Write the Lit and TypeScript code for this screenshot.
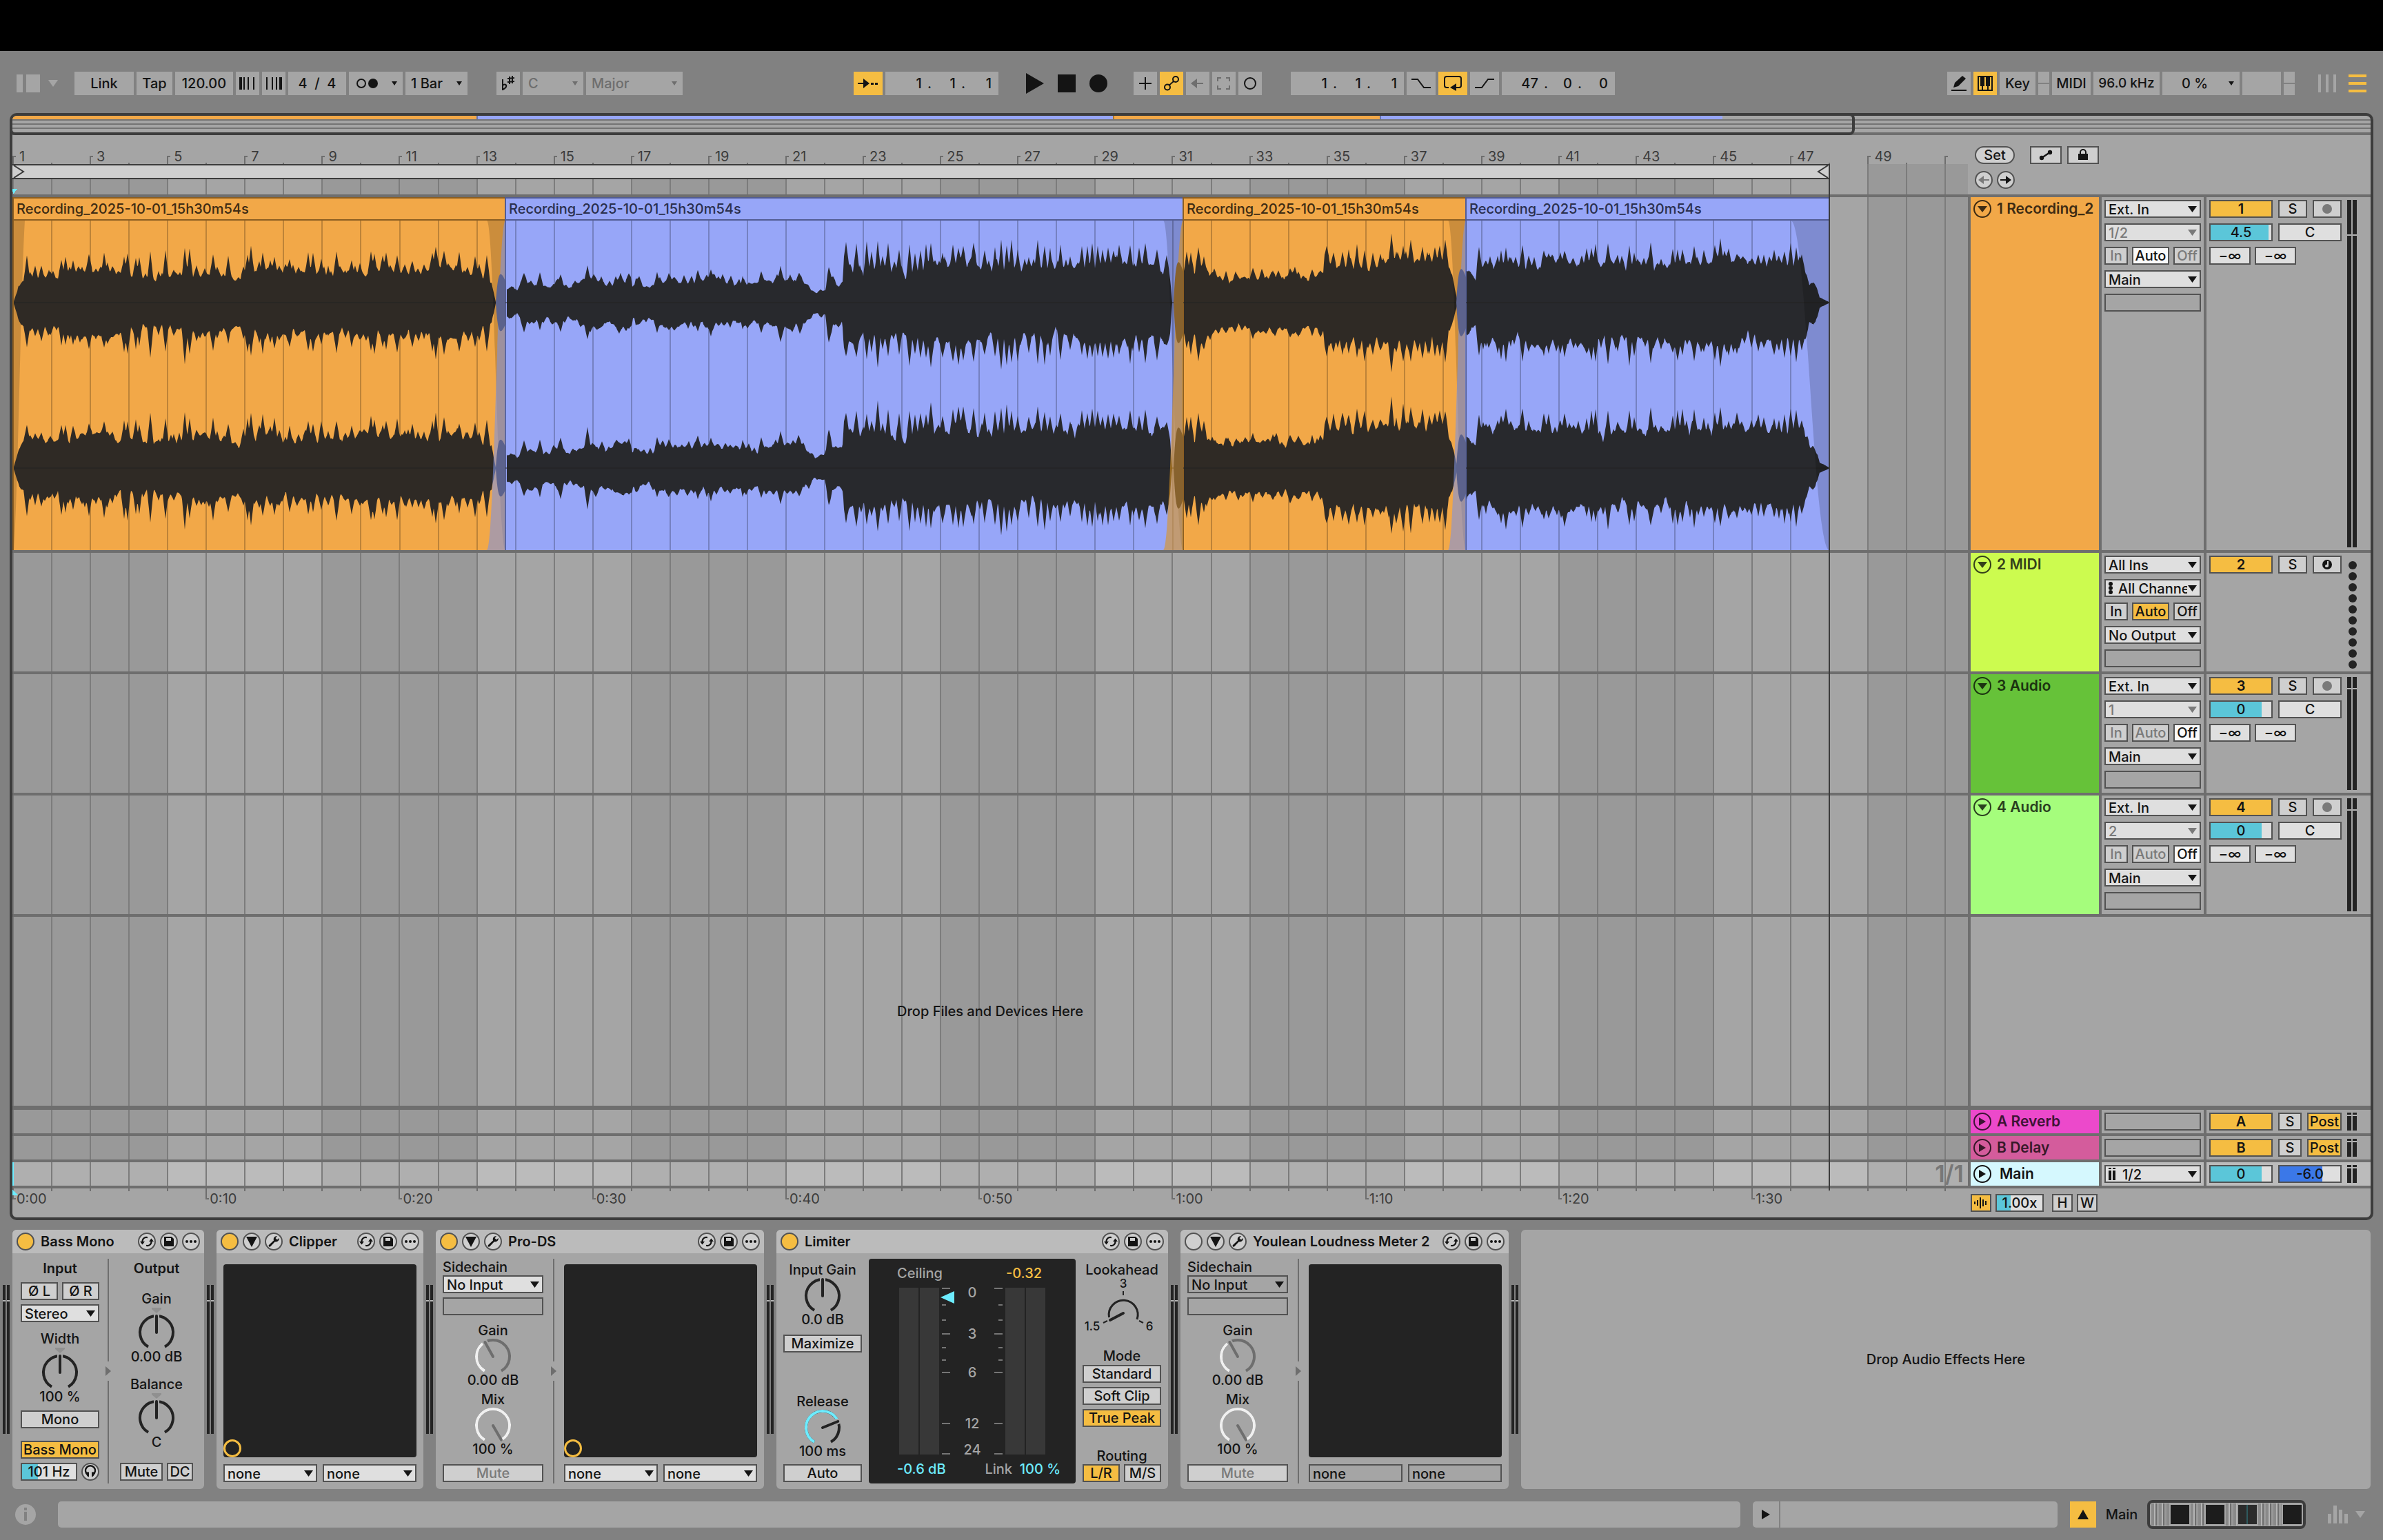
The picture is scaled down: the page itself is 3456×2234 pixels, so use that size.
import { LitElement, html, svg, css, nothing, type TemplateResult } from "lit";
import { customElement } from "lit/decorators.js";

/* ---------- timeline geometry ---------- */
const VIEW = 2836; // drawing units across the visible timeline
const BAR = 56.05; // drawing units per bar
const barX = (bar: number) => (bar - 1) * BAR + 1;
const pct = (x: number) => `${((x / VIEW) * 100).toFixed(4)}%`;
const BARS = Array.from({ length: 51 }, (_, i) => i + 1);
const END = 2635;
const BODY = 478;

/* ---------- clip data ---------- */
type Pt = [number, number];
interface Clip {
  start: number;
  end: number;
  color: "orange" | "blue";
  env: Pt[];
  spikes: Pt[];
}
const NAME = "Recording_2025-10-01_15h30m54s";
const CLIPS: Clip[] = [
  {
    start: 0, end: 714, color: "orange",
    env: [[2, 2], [9, 25], [16, 36], [42, 35], [72, 37], [102, 45], [142, 43], [177, 36], [212, 31], [232, 37], [282, 42], [327, 33], [347, 40], [402, 42], [442, 41], [542, 42], [622, 44], [672, 42], [688, 37], [695, 34], [701, 1]],
    spikes: [[21, 66], [33, 51], [42, 55], [55, 44], [71, 65], [77, 65], [88, 59], [101, 52], [111, 66], [121, 51], [133, 69], [138, 56], [145, 51], [162, 71], [167, 71], [179, 66], [184, 62], [200, 76], [212, 44], [222, 73], [234, 49], [250, 84], [257, 75], [267, 56], [279, 51], [291, 73], [297, 52], [313, 63], [335, 54], [341, 73], [346, 78], [358, 61], [363, 73], [374, 57], [380, 68], [387, 54], [402, 65], [415, 49], [429, 70], [436, 68], [448, 63], [458, 51], [470, 72], [492, 64], [504, 56], [520, 73], [525, 72], [537, 65], [542, 71], [558, 73], [569, 52], [580, 61], [597, 56], [609, 68], [614, 83], [626, 78], [632, 54], [643, 56], [648, 68], [660, 55], [671, 68], [677, 54], [688, 70]],
  },
  {
    start: 714, end: 1697, color: "blue",
    env: [[717, 20], [724, 23], [732, 16], [740, 29], [757, 26], [777, 21], [792, 28], [805, 20], [832, 30], [847, 35], [862, 25], [877, 34], [897, 32], [900, 15], [904, 32], [922, 20], [942, 31], [982, 30], [1022, 32], [1054, 30], [1057, 18], [1062, 30], [1080, 25], [1092, 30], [1132, 34], [1144, 38], [1152, 26], [1164, 14], [1180, 18], [1185, 40], [1190, 30], [1204, 25], [1206, 52], [1232, 48], [1292, 44], [1342, 50], [1392, 52], [1442, 47], [1502, 48], [1562, 50], [1622, 52], [1672, 52], [1679, 40], [1682, 1]],
    spikes: [[742, 40], [765, 41], [795, 42], [834, 56], [894, 40], [935, 42], [952, 42], [994, 44], [1013, 46], [1059, 40], [1086, 45], [1114, 54], [1184, 54], [1209, 82], [1215, 56], [1224, 81], [1239, 83], [1246, 70], [1255, 91], [1262, 63], [1270, 80], [1286, 80], [1301, 86], [1309, 75], [1317, 78], [1325, 80], [1332, 89], [1349, 77], [1364, 83], [1372, 84], [1379, 86], [1394, 84], [1410, 78], [1425, 83], [1434, 92], [1442, 86], [1449, 86], [1458, 80], [1474, 70], [1487, 85], [1497, 84], [1505, 76], [1520, 80], [1534, 70], [1551, 78], [1559, 78], [1566, 84], [1574, 79], [1581, 78], [1589, 78], [1597, 76], [1605, 78], [1621, 85], [1634, 76], [1643, 82], [1660, 79], [1674, 65]],
  },
  {
    start: 1697, end: 2107, color: "orange",
    env: [[1699, 40], [1703, 45], [1728, 48], [1732, 42], [1747, 37], [1756, 33], [1782, 36], [1832, 38], [1845, 34], [1857, 40], [1878, 31], [1901, 38], [1903, 56], [1922, 50], [1982, 53], [2022, 56], [2078, 54], [2088, 35], [2096, 1]],
    spikes: [[1703, 69], [1709, 73], [1720, 79], [1728, 67], [1740, 45], [1760, 44], [1799, 50], [1828, 47], [1853, 48], [1865, 47], [1885, 47], [1897, 47], [1906, 78], [1916, 74], [1929, 76], [1938, 78], [1950, 82], [1961, 80], [1973, 74], [1984, 70], [2000, 98], [2007, 75], [2017, 87], [2028, 90], [2045, 82], [2055, 76], [2063, 76], [2070, 78], [2078, 87]],
  },
  {
    start: 2107, end: END, color: "blue",
    env: [[2109, 47], [2114, 42], [2123, 34], [2126, 50], [2182, 52], [2232, 55], [2292, 52], [2352, 50], [2422, 53], [2482, 56], [2532, 50], [2582, 50], [2592, 52], [2600, 46], [2606, 28], [2612, 28], [2618, 18], [2621, 7], [2628, 4], [2634, 1]],
    spikes: [[2127, 80], [2137, 65], [2154, 69], [2159, 79], [2166, 84], [2173, 65], [2190, 81], [2199, 67], [2221, 76], [2228, 76], [2245, 70], [2251, 79], [2264, 66], [2283, 75], [2290, 79], [2296, 80], [2314, 84], [2328, 66], [2345, 86], [2352, 72], [2376, 88], [2391, 65], [2408, 77], [2415, 82], [2422, 80], [2439, 81], [2453, 74], [2469, 82], [2477, 88], [2489, 73], [2501, 75], [2522, 66], [2532, 74], [2540, 70], [2555, 74], [2562, 72], [2570, 79], [2579, 81], [2587, 81], [2595, 66], [2611, 30]],
  },
];

const FADES = [
  { x0: 688, x1: 715, tint: "tint-blue", wave: "ghost-blue", amp: 45 },
  { x0: 1669, x1: 1698, tint: "tint-orange", wave: "ghost-orange", amp: 64 },
  { x0: 2082, x1: 2108, tint: "tint-blue", wave: "ghost-blue", amp: 53 },
];

function random(seed: number) {
  let s = seed >>> 0;
  return () => {
    s = (s + 0x6d2b79f5) >>> 0;
    let t = Math.imul(s ^ (s >>> 15), 1 | s);
    t = (t + Math.imul(t ^ (t >>> 7), 61 | t)) ^ t;
    return ((t ^ (t >>> 14)) >>> 0) / 4294967296;
  };
}

function envelope(env: Pt[], x: number) {
  for (let i = 1; i < env.length; i++) {
    if (x <= env[i][0]) {
      const [ax, ay] = env[i - 1];
      const [bx, by] = env[i];
      return ay + ((by - ay) * (x - ax)) / Math.max(1, bx - ax);
    }
  }
  return 0;
}

/* One edge of a waveform: the envelope with drift, the clip's own peaks and small peaks between them. */
function side(clip: Clip, seed: number) {
  const rnd = random(seed);
  const first = clip.env[0][0];
  const last = clip.env[clip.env.length - 1][0];
  const peaks = clip.spikes.map(([x, a]) => [x, a * (0.94 + rnd() * 0.14)] as Pt);
  for (let x = first + 24; x < last - 30; x += 6 + rnd() * 8) {
    peaks.push([Math.round(x), envelope(clip.env, x) * (1.02 + rnd() * 0.34)]);
  }
  const out: Pt[] = [];
  let drift = 0;
  for (let x = first; x <= last; x += 1) {
    if (x % 2 === 0) drift = drift * 0.84 + (rnd() - 0.5) * 0.16;
    const base = envelope(clip.env, x) * (0.97 + drift);
    let a = base;
    for (const [px, pa] of peaks) {
      const d = Math.abs(px - x);
      if (d < 5) a = Math.max(a, base + (pa - base) * (d < 1 ? 1 : 1 - d / 5));
    }
    out.push([x, Math.max(0.5, a)]);
  }
  return out;
}

function wavePath(clip: Clip, centre: number, seed: number) {
  const up = side(clip, seed);
  const down = side(clip, seed + 7).reverse();
  const p = (x: number, y: number) => `${x} ${y.toFixed(1)}`;
  return `M${up.map(([x, a]) => p(x, centre - a)).join("L")}L${down.map(([x, a]) => p(x, centre + a)).join("L")}Z`;
}
const CENTRES = [119, 359];
const WAVES = CLIPS.flatMap((clip, i) =>
  CENTRES.map((c, j) => ({ d: wavePath(clip, c, 31 * i + 113 * j + 5), color: clip.color })),
);

/* S-shaped fade curve between two corners, closed along the right edge. */
function fadeShape(x0: number, x1: number, rising: boolean) {
  const w = x1 - x0;
  const [a, b] = rising ? [BODY, 0] : [0, BODY];
  return `M${x0} ${a}C${x0 + w * 0.42} ${a} ${x0 + w * 0.58} ${b} ${x1} ${b}L${x1} ${a}Z`;
}

/* ---------- icons ---------- */
const I = (w: number, h: number, body: TemplateResult) =>
  html`<svg class="ico" width=${w} height=${h} viewBox="0 0 ${w} ${h}" aria-hidden="true">${body}</svg>`;
const icons = {
  nudgeDown: I(24, 18, svg`<path d="M0 0h4v18H0zM6 0h2v18H6zM12 0h2v18h-2zM20 0h2v18h-2z"/>`),
  nudgeUp: I(24, 18, svg`<path d="M1 0h2v18H1zM9 0h2v18H9zM15 0h2v18h-2zM20 0h4v18h-4z"/>`),
  metro: I(34, 16, svg`<circle cx="8" cy="8" r="6" fill="none" stroke="currentColor" stroke-width="2"/><circle cx="25" cy="8" r="7"/>`),
  scale: I(20, 22, svg`<path d="M2 5v16M2 14c3-3 6-1 5 2c-1 2-3 3-5 4" fill="none" stroke="currentColor" stroke-width="2"/><path d="M12 1v11M16 0v11M9 4l10-1M9 9l10-1" fill="none" stroke="currentColor" stroke-width="2"/>`),
  follow: I(32, 16, svg`<path d="M1 7h8V1l9 7l-9 7V9H1zM20 7h4v3h-4zM26 7h4v3h-4z"/>`),
  play: I(26, 30, svg`<path d="M0 0L26 15L0 30z"/>`),
  stop: I(26, 26, svg`<path d="M0 0h26v26H0z"/>`),
  rec: I(26, 26, svg`<circle cx="13" cy="13" r="13"/>`),
  plus: I(20, 20, svg`<path d="M9 1h2v18H9zM1 9h18v2H1z"/>`),
  link: I(24, 24, svg`<g fill="none" stroke="currentColor" stroke-width="2"><circle cx="6" cy="17.500" r="4"/><circle cx="18" cy="6" r="4"/><path d="M8.500 14.500C12 12 12 11 15.500 9"/></g>`),
  back: I(20, 16, svg`<path d="M0 8l9-7v6h9v2H9v6z"/>`),
  frame: I(20, 20, svg`<path d="M1 7V2h5M13 2h5v5M18 13v5h-5M6 18H1v-5" fill="none" stroke="currentColor" stroke-width="2"/>`),
  ring: I(20, 20, svg`<circle cx="10" cy="10" r="8" fill="none" stroke="currentColor" stroke-width="2"/>`),
  punchIn: I(28, 16, svg`<path d="M0 2h9L18 14h10" fill="none" stroke="currentColor" stroke-width="2"/>`),
  punchOut: I(28, 16, svg`<path d="M0 14h10L19 2h9" fill="none" stroke="currentColor" stroke-width="2"/>`),
  loop: I(28, 24, svg`<path d="M8 18H5Q2 18 2 15V5Q2 2 5 2H23Q26 2 26 5V15Q26 18 23 18H18" fill="none" stroke="currentColor" stroke-width="2"/><path d="M19 12v11L10 18z"/>`),
  pencil: I(24, 24, svg`<path d="M4 18l2-7L17 1l5 4L11 16zM1 21h22v2H1z"/>`),
  piano: I(24, 24, svg`<path fill-rule="evenodd" d="M1 1h22v22H1zM3 3v18h4v-5H5V3zM9 16v5h6v-5h-2V3h-2v13zM19 3v13h-2v5h4V3z"/>`),
  auto: I(24, 16, svg`<path d="M6 12L18 4" fill="none" stroke="currentColor" stroke-width="2.500"/><circle cx="6" cy="12" r="3.200"/><circle cx="18" cy="4" r="3.200"/>`),
  lock: I(16, 18, svg`<path d="M1 7h14v9H1z"/><path d="M4 8V5a4 4 0 0 1 8 0v3" fill="none" stroke="currentColor" stroke-width="2"/>`),
  left: I(18, 14, svg`<path d="M1 7l8-6v5h8v2H9v5z"/>`),
  right: I(18, 14, svg`<path d="M17 7L9 1v5H1v2h8v5z"/>`),
  down: I(14, 9, svg`<path d="M0 0h14L7 9z"/>`),
  next: I(10, 12, svg`<path d="M0 0L10 6L0 12z"/>`),
  swap: I(20, 20, svg`<g fill="none" stroke="currentColor" stroke-width="2.200"><path d="M3.500 11C3 6 7 3 11 4.200"/><path d="M16.500 9C17 14 13 17 9 15.800"/></g><path d="M0 10h7l-3.500 4.500zM13 10h7L16.500 5.500z"/>`),
  save: I(16, 16, svg`<path fill-rule="evenodd" d="M1 1h11l3 3v11H1zM4 3v4h7V3z"/>`),
  dots: I(18, 6, svg`<circle cx="3" cy="3" r="2"/><circle cx="9" cy="3" r="2"/><circle cx="15" cy="3" r="2"/>`),
  wrench: I(18, 18, svg`<path d="M2 14L9 7.500C8 4 10.500 0.500 14 1.500L11.500 4L14 6.500L16.700 4C17.500 7.500 14 10.200 10.800 9.200L4.200 16.200C2.500 17.500 .7 15.700 2 14z"/>`),
  tri: I(16, 15, svg`<path d="M0 0h16L8 15z"/>`),
  phones: I(20, 20, svg`<path d="M6 14A7 7 0 1 1 14 14" fill="none" stroke="currentColor" stroke-width="2.400"/><path d="M4 10.500h4v7C5 17 4 14 4 10.500zM16 10.500h-4v7C15 17 16 14 16 10.500z"/>`),
  note: I(16, 16, svg`<path fill-rule="evenodd" d="M8 1a7 7 0 1 0 0 14A7 7 0 1 0 8 1zM8 3h2v7a2.500 2 0 1 1-2-2z"/>`),
  wave: I(20, 18, svg`<path d="M0 7h2v4H0zM4 5h2v8H4zM8 1h2v16H8zM12 4h2v10h-2zM16 6h2v6h-2z"/>`),
  chans: I(6, 18, svg`<circle cx="3" cy="3" r="3"/><circle cx="3" cy="9" r="3"/><circle cx="3" cy="15" r="3"/>`),
  pair: I(12, 18, svg`<path d="M0 0h4v2H0zM0 4h4v14H0zM6 0h4v2H6zM6 4h4v14H6z"/>`),
};

/* ---------- small parts ---------- */
let uid = 0;
interface SelectOpts { dim?: boolean; flat?: boolean; icon?: TemplateResult; arrow?: boolean; cls?: string }
const select = (label: string, value: string, o: SelectOpts = {}) => {
  const cls = ["sel", o.dim && "dim", o.flat && "flat", o.icon && "icon", o.arrow === false && "noarrow", o.cls].filter(Boolean).join(" ");
  return html`
    <span class=${cls}>
      ${o.icon ?? nothing}
      <select aria-label=${label} ?disabled=${!!o.dim}><option>${value}</option></select>
    </span>`;
};
const btn = (text: string | TemplateResult, cls = "", label = "") =>
  html`<button class="btn ${cls}" aria-label=${label || nothing}>${text}</button>`;
const tb = (text: string | TemplateResult, cls = "", label = "") =>
  html`<button class="tb ${cls}" aria-label=${label || nothing}>${text}</button>`;
const num = (label: string, value: string, fill: number, cls = "") => html`
  <span class="num ${cls}"><i style="width:${fill}%"></i><input aria-label=${label} .value=${value}></span>`;
const meter = () => html`<span class="meter"><i></i><i></i></span>`;

function polar(r: number, deg: number, cy: number) {
  const a = ((deg - 90) * Math.PI) / 180;
  return `${(28 + r * Math.cos(a)).toFixed(2)} ${(cy + r * Math.sin(a)).toFixed(2)}`;
}
const arc = (from: number, to: number, cy: number) =>
  `M${polar(24, from, cy)}A24 24 0 ${to - from > 180 ? 1 : 0} 1 ${polar(24, to, cy)}`;
interface KnobOpts { angle: number; tone?: "dark" | "dim" | "cyan"; mark?: boolean; cls?: string }
const knob = (label: string, value: string, o: KnobOpts) => {
  const id = `knob-${++uid}`;
  const cy = o.mark ? 39 : 28;
  const h = o.mark ? 64 : 52;
  const tone = o.tone ?? "dark";
  return html`
    <div class="knob ${tone} ${o.cls ?? ""}">
      <label for=${id}>${label}</label>
      <span class="dial">
        <svg width="56" height=${h} viewBox="0 0 56 ${h}" aria-hidden="true">
          <path class="rest" d=${arc(-150, 150, cy)} />
          ${tone === "dark" ? nothing : svg`<path class="lit" d=${arc(-150, o.angle, cy)} />`}
          ${o.angle < 150 ? svg`<path class="halo" d="M28 ${cy}L${polar(27, o.angle, cy)}" />` : nothing}
          <path class="hand" d="M28 ${cy}L${polar(24, o.angle, cy)}" />
          ${o.mark ? svg`<path class="mark" d="M21 3h14v2l-7 6l-7-6z" />` : nothing}
        </svg>
        <input id=${id} type="range" min="-150" max="150" .value=${String(o.angle)}>
      </span>
      <output for=${id}>${value}</output>
    </div>`;
};

const grid = () => html`
  <svg class="grid" width="100%" height="100%" aria-hidden="true">
    ${BARS.filter((b) => b % 8 === 1).map((b) => svg`<rect class="shade" x=${pct(barX(b))} y="0" width=${pct(BAR * 4)} height="100%" />`)}
    ${BARS.map((b) => svg`<line x1=${pct(barX(b))} x2=${pct(barX(b))} y1="0" y2="100%" />`)}
  </svg>`;

/* ---------- tracks ---------- */
interface Track {
  name: string; color: string; no: string; input: string; channel: string;
  midi?: boolean; monitor: string; output: string; volume?: [string, number];
}
const TRACKS: Track[] = [
  { name: "1 Recording_2", color: "t-orange", no: "1", input: "Ext. In", channel: "1/2", monitor: "Auto", output: "Main", volume: ["4.5", 95] },
  { name: "2 MIDI", color: "t-lime", no: "2", input: "All Ins", channel: "All Channels", midi: true, monitor: "Auto", output: "No Output" },
  { name: "3 Audio", color: "t-green", no: "3", input: "Ext. In", channel: "1", monitor: "Off", output: "Main", volume: ["0", 84] },
  { name: "4 Audio", color: "t-mint", no: "4", input: "Ext. In", channel: "2", monitor: "Off", output: "Main", volume: ["0", 84] },
];

@customElement("app-root")
export class AppRoot extends LitElement {
  static styles = css`
    :host { display: block; font: 500 20px/24px Inter, "Liberation Sans", sans-serif; color: #141414; }
    * { box-sizing: border-box; }
    button, input, select { font: inherit; color: inherit; margin: 0; padding: 0; border: 0; border-radius: 0; background: none; }
    svg { display: block; }
    .ico { fill: currentColor; flex: none; }
    .app { display: flex; flex-direction: column; min-height: 100vh; background: #818181; }
    .notch { height: 74px; background: #000; }

    /* toolbar */
    .toolbar { display: flex; align-items: center; padding: 30px 24px 26px; }
    .group { display: flex; align-items: center; gap: 4px; }
    .centre { margin-left: 248px; }
    .right { margin-left: auto; }
    .tb { position: relative; height: 34px; background: #a5a5a5; display: flex; align-items: center; justify-content: center; white-space: pre; }
    .tb.on { background: #f5bd42; }
    .tb.off { color: #6e6e6e; }
    .w16 { width: 16px; } .w34 { width: 34px; } .w38 { width: 38px; } .w42 { width: 42px; } .w52 { width: 52px; } .w56 { width: 56px; }
    .w62 { width: 62px; } .w84 { width: 84px; } .w86 { width: 86px; } .w78 { width: 78px; } .w88 { width: 88px; } .w90 { width: 90px; }
    .w96 { width: 96px; } .w112 { width: 112px; } .w140 { width: 140px; } .w164 { width: 164px; }
    .tb.w96 { font-size: 19px; }
    .between { justify-content: space-between; padding: 0 8px 0 10px; }
    .between.w112 { padding-left: 28px; }
    .tb .caret, .sel.bar::after { width: 8px; height: 6px; background: currentColor; clip-path: polygon(0 0, 100% 0, 50% 100%); }
    .pos { justify-content: flex-end; padding-right: 10px; }
    .pos span { width: 49px; text-align: right; }
    .pos span:last-child { width: 38px; }
    .pos b { font-weight: inherit; margin-left: 8px; }
    .split { flex-direction: column; gap: 2px; background: none; }
    .split i { flex: 1; align-self: stretch; background: #a5a5a5; }
    .bare { display: flex; align-items: center; }
    .transport { display: flex; align-items: center; gap: 20px; margin: 0 34px 0 36px; }
    .loopgroup { margin-left: 38px; }
    .viewer { display: flex; align-items: center; gap: 12px; color: #a5a5a5; margin-right: 24px; }
    .viewer .panes { display: flex; gap: 5px; height: 26px; }
    .panes i { background: #a5a5a5; width: 20px; }
    .panes i:first-child { width: 9px; }
    .scalegroup { margin-left: 42px; }
    .lines { display: flex; gap: 7px; height: 26px; margin: 0 14px 0 30px; }
    .lines i { width: 4px; background: #a5a5a5; }
    .menu { display: flex; flex-direction: column; justify-content: space-between; width: 26px; height: 26px; }
    .menu i { height: 4px; background: #f5bd42; }

    /* drop-downs */
    .sel { position: relative; display: flex; align-items: center; height: 26px; border: 2px solid #525252; background: #dfdfdf; min-width: 0; }
    .sel select { flex: 1; min-width: 0; width: 100%; height: 100%; appearance: none; padding: 0 18px 0 4px; outline: none; opacity: 1; }
    .sel::after { content: ""; position: absolute; right: 4px; top: 7px; width: 13px; height: 9px; background: currentColor; clip-path: polygon(0 0, 100% 0, 50% 100%); pointer-events: none; }
    .sel.dim { color: #7a7a7a; }
    .sel.flat { background: none; }
    .sel.noarrow::after { display: none; }
    .sel.icon { padding-left: 4px; }
    .sel.icon select { padding-left: 8px; }
    .sel.bar { border: 0; height: 34px; background: #a5a5a5; color: #6e6e6e; }
    .sel.bar select { padding-left: 8px; }
    .sel.bar.live { color: #141414; }
    .sel.bar::after { top: 14px; right: 8px; }

    .btn { display: flex; align-items: center; justify-content: center; height: 26px; border: 2px solid #525252; background: #cfcfcf; white-space: nowrap; }
    .btn.on { background: #f5bd42; }
    .btn.white { background: #fafafa; }
    .btn.off { color: #7a7a7a; }
    .btn.field { background: #dfdfdf; }
    .btn.strong { font-weight: 600; }
    .btn.pill { border-radius: 13px; width: 58px; }
    .round { display: flex; align-items: center; justify-content: center; flex: none; width: 26px; height: 26px; border: 2px solid #525252; border-radius: 50%; background: #cfcfcf; }
    .round.on { background: #f5bd42; }
    .round.clear { background: none; border-color: currentColor; }
    .round.off { color: #7a7a7a; }
    .num { position: relative; display: block; height: 26px; border: 2px solid #525252; background: #dfdfdf; }
    .num i { position: absolute; inset: 0 auto 0 0; background: #5bc6d9; }
    .num.blue i { background: #3b78e8; }
    .num input { position: relative; display: block; width: 100%; height: 100%; text-align: center; }

    /* arrangement */
    .arr { position: relative; flex: 1; display: flex; flex-direction: column; margin: 0 14px; border: 4px solid #3c3c3c; border-radius: 10px; background: #a5a5a5; overflow: hidden; }
    .overview { position: relative; height: 28px; border-bottom: 4px solid #6e6e6e; display: flex; flex-direction: column; }
    .mini { display: flex; height: 5px; }
    .mini i { display: block; height: 5px; border-left: 2px solid rgba(0, 0, 0, 0.3); }
    .mini i:first-child { border-left: 0; }
    .mini .orange { background: #f2a848; } .mini .blue { background: #97a6f8; }
    .overview hr { margin: 0; border: 0; background: #747474; height: 2px; }
    .overview b { height: 4px; }
    .window { position: absolute; inset: -4px auto -4px -4px; border: 4px solid #3c3c3c; border-radius: 8px; }
    .top { display: flex; border-bottom: 4px solid #6e6e6e; color: #3c3c3c; }
    .lane { position: relative; flex: 1; min-width: 0; }
    .side { width: 584px; flex: none; }
    .grid { position: absolute; inset: 0; }
    .grid .shade { fill: #999; }
    .grid line { stroke: #7c7c7c; stroke-width: 2; shape-rendering: crispEdges; }
    .bars { height: 42px; position: relative; }
    .loopbar { position: relative; height: 22px; }
    .loopbar .range { position: relative; height: 22px; border: solid #3c3c3c; border-width: 2px 0; background: #cfcfcf; display: flex; justify-content: space-between; }
    .loopbar svg.brace { fill: none; stroke: #3c3c3c; stroke-width: 2; }
    .scrub { position: relative; height: 22px; }
    .ruler { position: absolute; inset: 0; }
    .ruler text { font: 400 20px Inter, "Liberation Sans", sans-serif; fill: #3c3c3c; }
    .ruler path, .ruler line { stroke: #6e6e6e; stroke-width: 2; fill: none; shape-rendering: crispEdges; }
    .endline { position: absolute; top: 70px; bottom: 40px; left: calc((100% - 584px) * 0.9288); width: 2px; background: #3c3c3c; }
    .locators { display: flex; flex-direction: column; gap: 10px; padding: 16px 0 8px 10px; color: #141414; }
    .locators > div { display: flex; gap: 6px; align-items: center; }
    .locators .wide { width: 46px; }
    .locators .tools { display: flex; gap: 8px; margin-left: 16px; }

    .row { display: flex; border-bottom: 4px solid #6e6e6e; }
    .row.last { border-bottom-width: 6px; }
    .row.fill { flex: 1; }
    .row.fill .side { border-left: 4px solid #6e6e6e; }
    .head, .io, .mix { flex: none; border-left: 4px solid #6e6e6e; }
    .head { width: 190px; padding: 4px; display: flex; gap: 8px; align-items: flex-start; font-weight: 600; font-size: 21px; white-space: nowrap; }
    .head span { line-height: 26px; }
    .head.t-ice { gap: 12px; }
    .t-orange { background: #f2a848; color: #3d2b13; } .t-lime { background: #ccfb4f; color: #34401a; } .t-green { background: #66c239; color: #1b3310; }
    .t-mint { background: #a5fd7c; color: #2a401f; } .t-pink { background: #ec49cb; color: #3c1334; } .t-rose { background: #d45c9c; color: #361828; } .t-ice { background: #d5f8fe; color: #141414; }
    .io { width: 152px; padding: 4px 4px 6px; display: flex; flex-direction: column; gap: 8px; }
    .trio { display: flex; gap: 6px; }
    .trio :nth-child(1) { width: 34px; } .trio :nth-child(2) { width: 54px; } .trio :nth-child(3) { width: 40px; }
    .mix { width: 242px; padding: 4px 20px 4px 4px; display: flex; gap: 8px; }
    .strips { width: 192px; display: flex; flex-direction: column; gap: 8px; }
    .strips > div { display: flex; gap: 8px; }
    .w92 { width: 92px; } .w60 { width: 60px; } .w50 { width: 50px; } .w30 { width: 30px; } .w70 { width: 70px; }
    .strips .sends { gap: 6px; }
    .meter { display: flex; gap: 2px; }
    .meter i { width: 6px; background: linear-gradient(#232323 10%, #b5b5b5 10%, #b5b5b5 calc(10% + 2px), #232323 calc(10% + 2px)); }
    .leds { display: flex; flex-direction: column; gap: 4px; padding: 8px 0 0 2px; }
    .leds i { width: 12px; height: 12px; border-radius: 50%; background: #232323; }
    .compact .io, .compact .head, .compact .mix { padding-bottom: 4px; }
    .main-row .lane, .main-row .io, .main-row .mix { background: #bbb; }
    .main-row .shade { fill: #afafaf; }
    .sig { position: absolute; right: 6px; top: 3px; font: 600 34px/28px Inter, sans-serif; color: #777; }
    .cursor { position: absolute; inset: 0 auto 0 0; width: 2px; background: #6decff; }

    .clips { position: relative; display: flex; height: 512px; }
    .clip { display: flex; flex-direction: column; min-width: 0; border-left: 2px solid #525c93; border-top: 2px solid #525c93; }
    .clip:first-child { border-left-color: #3c3c3c; }
    .clip header { height: 32px; padding: 2px 4px 0; line-height: 26px; white-space: nowrap; border-bottom: 2px solid #525c93; color: #2a2f4d; }
    .clip.blue { background: #97a6f8; }
    .clip.orange { background: #f2a848; border-color: #8b5e22; }
    .clip.orange header { border-color: #8b5e22; color: #3d2b13; }
    .waves { position: absolute; left: 0; top: 34px; width: 100%; height: 478px; }
    .waves line { stroke: #000; stroke-opacity: 0.22; stroke-width: 2; shape-rendering: crispEdges; }
    .wave-orange { fill: #2f2a25; } .wave-blue { fill: #28292d; }
    .dark { fill: #000; fill-opacity: 0.16; }
    .tint-blue { fill: #7f92df; fill-opacity: 0.6; } .tint-orange { fill: #dd941c; fill-opacity: 0.6; }
    .ghost-blue { fill: #5c628c; } .ghost-orange { fill: #87622e; }
    .zero { stroke: #232323; stroke-width: 1; }
    .drop { position: absolute; inset: 0; display: flex; align-items: center; justify-content: center; }
    .foot { display: flex; height: 42px; }
    .foot .tools { display: flex; padding: 8px 0 0 4px; gap: 6px; }

    /* devices */
    .rack { display: flex; padding: 14px 18px 18px 0; height: 408px; }
    .rack .meter { width: 18px; padding-left: 4px; height: 216px; margin-top: 80px; }
    .rack .meter i { width: 4px; }
    .device { display: flex; flex-direction: column; background: #a5a5a5; border-radius: 6px; overflow: hidden; flex: none; }
    .device > header { display: flex; align-items: center; gap: 6px; height: 34px; padding: 0 6px; background: #bbb; font-weight: 600; }
    .device h2 { flex: 1; margin: 0 0 0 3px; font: inherit; white-space: nowrap; }
    .device .cols { display: flex; flex: 1; }
    .cols > * { flex: none; }
    .vsep { width: 8px; margin: 8px 8px 8px 9px; display: flex; flex-direction: column; justify-content: space-between; align-items: center; color: #6e6e6e; }
    .chain + .vsep { margin: 8px 1px 8px 11px; }
    .vsep i { width: 2px; height: 149px; background: #6e6e6e; }
    .stack { display: flex; flex-direction: column; }
    .pair { display: flex; gap: 6px; }
    .pair.even > *, .pair .num { flex: 1; }
    .center { text-align: center; }
    .knob { display: flex; flex-direction: column; align-items: center; line-height: 20px; }
    .dial { position: relative; }
    .dial input { position: absolute; inset: 0; width: 100%; height: 100%; opacity: 0; }
    .knob path { fill: none; stroke: #232323; stroke-width: 4; }
    .knob .hand { stroke-linecap: round; }
    .knob .halo { stroke: #a5a5a5; stroke-width: 8; }
    .knob .mark { fill: #232323; stroke: none; }
    .knob.dim .rest, .knob.dim .hand { stroke: #6e6e6e; }
    .knob.dim .lit { stroke: #f0f0f0; }
    .knob.cyan .lit { stroke: #6decff; }
    .bass-in { width: 126px; padding: 12px 0 12px 12px; }
    .bass-in .phase { margin-top: 10px; }
    .bass-in .mode { margin: 6px 0 14px; }
    .bass-in .mono { margin: 10px 0 18px; }
    .bass-in .freq { margin-top: 6px; }
    .bass-out { width: 127px; padding: 12px 11px 0 0; align-items: center; }
    .bass-out .title { margin-bottom: 24px; }
    .bass-out .knob { margin-bottom: 20px; }
    .title { font-weight: 600; line-height: 20px; }
    .plug { padding: 16px 10px 10px; display: flex; flex-direction: column; gap: 10px; }
    .screen { width: 280px; height: 280px; background: #232323; border-radius: 4px; display: flex; align-items: flex-end; }
    .screen i { width: 26px; height: 26px; border: 3px solid #f5bd42; border-radius: 50%; }
    .plug .two { display: flex; gap: 8px; }
    .two .sel { width: 136px; }
    .chain { width: 156px; padding: 8px 0 10px 10px; }
    .chain .empty { margin: 6px 0 12px; }
    .chain .knob { margin-bottom: 8px; }
    .push { margin-top: auto; }
    .empty { height: 26px; border: 2px solid #525252; }
    .lim { width: 134px; padding: 14px 10px 10px; }
    .lim .max { margin-top: 12px; }
    .lim .auto { margin-top: 9px; }
    .lim .cap { text-align: center; line-height: 20px; }
    .modes { display: flex; flex-direction: column; gap: 6px; margin-top: 3px; }
    .look { margin-bottom: 21px; }
    .display { width: 300px; margin: 8px 0; background: #232323; border-radius: 4px; color: #a5a5a5; display: flex; flex-direction: column; padding: 10px 22px 8px 41px; }
    .display .line { display: flex; justify-content: space-between; line-height: 22px; }
    .display .line.first { padding-right: 27px; }
    .scale { margin: 10px 0 10px 3px; overflow: visible; }
    .scale text { font: 500 20px Inter, "Liberation Sans", sans-serif; fill: #a5a5a5; text-anchor: middle; }
    .amber { color: #f5bd42; } .cyan-t { color: #6decff; }
    .look text { font: 500 17px Inter, "Liberation Sans", sans-serif; fill: #141414; text-anchor: middle; }
    .dropzone { flex: 1; display: flex; align-items: center; justify-content: center; background: #a5a5a5; border-radius: 6px; }

    /* status */
    .status { display: flex; align-items: center; height: 56px; padding: 0 18px 18px 22px; }
    .info { width: 30px; height: 30px; border-radius: 50%; background: #a5a5a5; color: #818181; display: flex; justify-content: center; align-items: center; }
    .well { height: 38px; background: #a5a5a5; border-radius: 5px; }
    .hint { flex: 1; margin-left: 32px; }
    .expand { width: 38px; margin-left: 18px; display: flex; align-items: center; justify-content: center; border-radius: 5px 0 0 5px; }
    .prog { width: 402px; margin-left: 2px; border-radius: 0 5px 5px 0; }
    .warn { width: 38px; height: 38px; margin-left: 18px; background: #f5bd42; display: flex; align-items: center; justify-content: center; }
    .maplabel { width: 74px; text-align: center; }
    .map { display: flex; align-items: center; gap: 2px; flex: none; width: 230px; height: 42px; border: 4px solid #3c3c3c; border-radius: 8px; background: #a5a5a5; padding: 0 2px; }
    .map i { flex: 20; height: 32px; background: repeating-linear-gradient(90deg, #8a8a8a 0 4px, #b5b5b5 4px 6px, #6e6e6e 6px 8px, #999 8px 11px); }
    .map i:nth-child(1) { flex-grow: 26; }
    .map i:nth-child(5) { flex-grow: 16; }
    .map i:nth-child(7) { flex-grow: 34; }
    .map i.k { flex: 28; height: 28px; background: #1c1c1c; }
    .map i.k:nth-child(6) { background: linear-gradient(90deg, #2b2b2b 45%, #2f5a5e 45% 52%, #2b2b2b 52%); }
    .levels { margin: 0 8px 0 32px; color: #a5a5a5; }
  `;

  private head(name: string, color: string, closed = false) {
    return html`<div class="head ${color}">
      <button class="round clear" aria-label="Fold ${name}">${closed ? icons.next : icons.down}</button><span>${name}</span>
    </div>`;
  }

  private toolbar() {
    const pos = (a: string, b: string, c: string) => html`<span>${a}<b>.</b></span><span>${b}<b>.</b></span><span>${c}</span>`;
    const caret = html`<i class="caret"></i>`;
    return html`
      <nav class="toolbar">
        <div class="viewer"><span class="panes"><i></i><i></i></span>${I(14, 10, svg`<path d="M0 0h14L7 10z"/>`)}</div>
        <div class="group">
          ${tb("Link", "w86")}${tb("Tap", "w52")}${tb("120.00", "w84")}
          ${tb(icons.nudgeDown, "w34", "Nudge down")}${tb(icons.nudgeUp, "w34", "Nudge up")}
          ${tb("4  /  4", "w84")}${tb(html`${icons.metro}${caret}`, "w78 between", "Metronome")}
          ${select("Quantization", "1 Bar", { cls: "bar live w90" })}
        </div>
        <div class="group scalegroup">
          ${tb(icons.scale, "w34", "Scale mode")}
          ${select("Root note", "C", { cls: "bar w88" })}${select("Scale", "Major", { cls: "bar w140" })}
        </div>
        <div class="group centre">
          ${tb(icons.follow, "on w42", "Follow")}${tb(pos("1", "1", "1"), "pos w164", "Position")}
          <div class="transport">
            <button class="bare" aria-label="Play">${icons.play}</button>
            <button class="bare" aria-label="Stop">${icons.stop}</button>
            <button class="bare" aria-label="Record">${icons.rec}</button>
          </div>
          ${tb(icons.plus, "w34", "Overdub")}${tb(icons.link, "on w34", "Automation arm")}${tb(icons.back, "off w34", "Re-enable automation")}
          ${tb(icons.frame, "off w34", "Capture")}${tb(icons.ring, "w34", "Session record")}
          <div class="group loopgroup">
            ${tb(pos("1", "1", "1"), "pos w164", "Loop start")}${tb(icons.punchIn, "w42", "Punch in")}${tb(icons.loop, "on w42", "Loop")}
            ${tb(icons.punchOut, "w42", "Punch out")}${tb(pos("47", "0", "0"), "pos w164", "Loop length")}
          </div>
        </div>
        <div class="group right">
          ${tb(icons.pencil, "w34", "Draw mode")}${tb(icons.piano, "on w34", "Computer MIDI keyboard")}${tb("Key", "w52")}
          ${tb(html`<i></i><i></i>`, "split w16", "Key in and out")}${tb("MIDI", "w56")}${tb("96.0 kHz", "w96")}
          ${tb(html`<span>0 %</span>${caret}`, "between w112", "CPU load")}${tb("", "w56", "Overload")}${tb(html`<i></i><i></i>`, "split w16", "MIDI in and out")}
          <span class="lines"><i></i><i></i><i></i></span>
          <button class="menu" aria-label="Arrangement view"><i></i><i></i><i></i></button>
        </div>
      </nav>`;
  }

  private overview() {
    const w = (px: number) => `width:${((px / 3420) * 100).toFixed(3)}%`;
    return html`
      <div class="overview">
        <div class="mini"><i class="orange" style=${w(673)}></i><i class="blue" style=${w(923)}></i><i class="orange" style=${w(387)}></i><i class="blue" style=${w(497)}></i></div>
        <hr><b></b><hr><b></b><hr><b></b>
        <div class="window" style="width:${((2676 / 3420) * 100).toFixed(3)}%"></div>
      </div>`;
  }

  private top() {
    return html`
      <div class="top">
        <div class="lane">
          <div class="bars">
            <svg class="ruler" width="100%" height="100%">
              ${BARS.map((b) =>
                b % 2
                  ? svg`<svg x=${pct(barX(b))} overflow="visible"><path d="M4 31H0V42" />${b < 51 ? svg`<text x="9" y="38">${b}</text>` : nothing}</svg>`
                  : svg`<line x1=${pct(barX(b))} x2=${pct(barX(b))} y1="40" y2="42" />`,
              )}
            </svg>
          </div>
          <div class="loopbar">
            ${grid()}
            <div class="range" style="width:${pct(END)}">
              <svg class="brace" width="18" height="18"><path d="M2 0L16 9L2 18" /></svg>
              <svg class="brace" width="18" height="18"><path d="M16 0L2 9L16 18" /></svg>
            </div>
          </div>
          <div class="scrub">${grid()}
            <svg class="ruler" width="8" height="22"><path d="M0 14h7L1 22z" style="fill:#6decff;stroke:none" /></svg>
          </div>
        </div>
        <div class="locators side">
          <div>${btn("Set", "pill")}<span class="tools">${btn(icons.auto, "wide", "Automation")}${btn(icons.lock, "wide", "Lock envelopes")}</span></div>
          <div><button class="round off" aria-label="Previous locator">${icons.left}</button><button class="round" aria-label="Next locator">${icons.right}</button></div>
        </div>
      </div>`;
  }

  private clipLane() {
    return html`
      <div class="clips">
        ${CLIPS.map((c) => html`<div class="clip ${c.color}" style="width:${pct(c.end - c.start)}"><header>${NAME}</header></div>`)}
      </div>
      <svg class="waves" viewBox="0 0 ${VIEW} ${BODY}" preserveAspectRatio="none" aria-hidden="true">
        ${BARS.filter((b) => b > 1 && b < 48).map((b) => svg`<line x1=${barX(b)} x2=${barX(b)} y1="0" y2=${BODY} />`)}
        <path class="dark" d="M2 0H18C12 100 8 400 2 478Z" />
        ${WAVES.map((w) => svg`<path class="wave-${w.color}" d=${w.d} />`)}
        ${CENTRES.map((c) => svg`<path class="zero" d="M2 ${c}H${END}" />`)}
        ${FADES.map((f) => {
          const m = f.x1 - 14;
          return svg`
            <path class="dark" d=${fadeShape(f.x0, f.x1, false)} />
            <path class=${f.tint} d=${fadeShape(f.x0, f.x1, true)} />
            ${CENTRES.map((c) => svg`<path class=${f.wave} d="M${m} ${c}C${m + 3} ${c - f.amp} ${f.x1 - 8} ${c - f.amp * 1.1} ${f.x1} ${c - f.amp * 0.7}V${c + f.amp * 0.7}C${f.x1 - 8} ${c + f.amp * 1.1} ${m + 3} ${c + f.amp} ${m} ${c}Z" />`)}`;
        })}
        <path class="dark" d=${fadeShape(2579, END, false)} />
      </svg>`;
  }

  private track(t: Track, i: number) {
    const mon = (m: string) => {
      const on = t.monitor === m;
      return btn(m, on ? (t.midi ? "on" : "white") : t.midi ? "" : "off");
    };
    return html`
      <div class="row">
        <div class="lane">${grid()}${i === 0 ? this.clipLane() : nothing}</div>
        ${this.head(t.name, t.color)}
        <div class="io">
          ${select(`${t.name} input`, t.input)}
          ${select(`${t.name} channel`, t.channel, t.midi ? { icon: icons.chans } : { dim: true })}
          <div class="trio">${mon("In")}${mon("Auto")}${mon("Off")}</div>
          ${select(`${t.name} output`, t.output)}
          <div class="empty"></div>
        </div>
        <div class="mix">
          <div class="strips">
            <div>${btn(t.no, "on strong w92")}${btn("S", "w42")}${btn(t.midi ? icons.note : I(14, 14, svg`<circle cx="7" cy="7" r="7"/>`), t.midi ? "w42" : "off w42", "Arm")}</div>
            ${t.volume
              ? html`<div>${num(`${t.name} volume`, t.volume[0], t.volume[1], "w92")}${num(`${t.name} pan`, "C", 0, "w92")}</div>
                  <div class="sends">${btn("−∞", "field w60")}${btn("−∞", "field w60")}</div>`
              : nothing}
          </div>
          ${t.midi ? html`<span class="leds">${Array.from({ length: 10 }, () => html`<i></i>`)}</span>` : meter()}
        </div>
      </div>`;
  }

  private returnRow(letter: string, name: string, color: string) {
    return html`
      <div class="row compact">
        <div class="lane">${grid()}</div>
        ${this.head(`${letter} ${name}`, color, true)}
        <div class="io"><div class="empty"></div></div>
        <div class="mix"><div class="strips"><div>${btn(letter, "on strong w92")}${btn("S", "w34")}${btn("Post", "on w50")}</div></div>${meter()}</div>
      </div>`;
  }

  private arrangement() {
    const times = Array.from({ length: 10 }, (_, i) => `${Math.floor(i / 6)}:${i % 6}0`);
    return html`
      <main class="arr">
        ${this.overview()}${this.top()}
        ${TRACKS.map((t, i) => this.track(t, i))}
        <div class="row fill last">
          <div class="lane">${grid()}<span class="drop">Drop Files and Devices Here</span></div>
          <div class="side"></div>
        </div>
        ${this.returnRow("A", "Reverb", "t-pink")}${this.returnRow("B", "Delay", "t-rose")}
        <div class="row compact main-row">
          <div class="lane">${grid()}<i class="cursor"></i><span class="sig">1/1</span></div>
          ${this.head("Main", "t-ice", true)}
          <div class="io">${select("Main output", "1/2", { icon: icons.pair })}</div>
          <div class="mix"><div class="strips"><div>${num("Main volume", "0", 84, "w92")}${num("Cue volume", "-6.0", 70, "w92 blue")}</div></div>${meter()}</div>
        </div>
        <div class="foot">
          <div class="lane">
            <svg class="ruler" width="100%" height="100%">
              ${BARS.map((b) => svg`<line x1=${pct(barX(b))} x2=${pct(barX(b))} y1="0" y2="4" />`)}
              ${times.map((t, i) => svg`<svg x=${pct(barX(i * 5 + 1))} overflow="visible"><path d="M0 0V15H4" /><text x="5" y="22">${t}</text></svg>`)}
              <path d="M0 2L8 10H0Z" style="fill:#6decff;stroke:none" />
            </svg>
          </div>
          <div class="tools side">
            ${btn(icons.wave, "on w30", "Optimize height")}${num("Zoom", "1.00x", 30, "w70")}
            <span></span>${btn("H", "w30")}${btn("W", "w30")}
          </div>
        </div>
        <div class="endline"></div>
      </main>`;
  }

  private device(title: string, width: number, body: TemplateResult, plugin = false, on = true) {
    return html`
      <section class="device" style="width:${width}px">
        <header>
          <button class="round ${on ? "on" : ""}" aria-label="${title} on"></button>
          ${plugin ? html`<button class="round" aria-label="Unfold">${icons.tri}</button><button class="round" aria-label="Edit">${icons.wrench}</button>` : nothing}
          <h2>${title}</h2>
          <button class="round" aria-label="Hot-swap">${icons.swap}</button>
          <button class="round" aria-label="Save preset">${icons.save}</button>
          <button class="round" aria-label="More">${icons.dots}</button>
        </header>
        <div class="cols">${body}</div>
      </section>
      ${meter()}`;
  }

  private vsep = () => html`<span class="vsep"><i></i>${I(8, 14, svg`<path d="M0 0L8 7L0 14z"/>`)}<i></i></span>`;

  private bassMono() {
    return html`
      <div class="stack bass-in">
        <span class="title center">Input</span>
        <div class="pair even phase">${btn("Ø L")}${btn("Ø R")}</div>
        <div class="mode">${select("Channel mode", "Stereo")}</div>
        ${knob("Width", "100 %", { angle: 0, mark: true })}
        ${btn("Mono", "mono")}
        ${btn("Bass Mono", "on")}
        <div class="pair freq">${num("Frequency", "101 Hz", 30)}<button class="round" aria-label="Listen">${icons.phones}</button></div>
      </div>
      ${this.vsep()}
      <div class="stack bass-out">
        <span class="title">Output</span>
        ${knob("Gain", "0.00 dB", { angle: 0, mark: true })}
        ${knob("Balance", "C", { angle: 0, mark: true })}
        <div class="pair">${btn("Mute", "w62")}${btn("DC", "w38")}</div>
      </div>`;
  }

  private plug(ring: boolean, arrows = true) {
    const none = (l: string) => select(l, "none", { flat: !arrows, arrow: arrows });
    return html`<div class="plug">
      <div class="screen">${ring ? html`<i></i>` : nothing}</div>
      <div class="two">${none("X parameter")}${none("Y parameter")}</div>
    </div>`;
  }

  private chain(flat = false) {
    return html`
      <div class="stack chain">
        <span>Sidechain</span>
        ${select("Sidechain", "No Input", { flat })}
        <div class="empty"></div>
        ${knob("Gain", "0.00 dB", { angle: -29, tone: "dim" })}
        ${knob("Mix", "100 %", { angle: 150, tone: "dim" })}
        ${btn("Mute", "off push")}
      </div>
      ${this.vsep()}
      ${this.plug(!flat, !flat)}`;
  }

  private limiter() {
    const ticks: [number, number][] = [[1, 12], [25, 6], [47, 6], [67, 12], [87, 6], [105, 6], [123, 12], [197, 12], [241, 12]];
    const marks: [string, number][] = [["0", 14], ["3", 74], ["6", 130], ["12", 204], ["24", 242]];
    return html`
      <div class="stack lim">
        ${knob("Input Gain", "0.0 dB", { angle: 0 })}
        ${btn("Maximize", "max")}
        ${knob("Release", "100 ms", { angle: 68, tone: "cyan", cls: "push" })}
        ${btn("Auto", "auto")}
      </div>
      <div class="display">
        <div class="line first"><span>Ceiling</span><span class="amber">-0.32</span></div>
        <svg class="scale" width="214" height="242" viewBox="0 0 214 242">
          <path fill="#383838" d="M0 0h28v242H0zM30 0h28v242H30zM154 0h28v242h-28zM184 0h28v242h-28z" />
          ${ticks.map(([y, w]) => svg`<path fill="#757575" d="M62 ${y - 1}h${w}v2h-${w}zM150 ${y - 1}h-${w}v2h${w}z" />`)}
          ${marks.map(([t, y]) => svg`<text x="106" y=${y}>${t}</text>`)}
          <path fill="#6decff" d="M60 14L80 5V23z" />
        </svg>
        <div class="line"><span class="cyan-t">-0.6 dB</span><span>Link&nbsp; <span class="cyan-t">100 %</span></span></div>
      </div>
      <div class="stack lim">
        <label class="cap" for="look">Lookahead</label>
        <span class="dial look">
          <svg width="114" height="84" viewBox="0 0 114 84">
            <g fill="none" stroke="#232323" stroke-width="3">
              <path d="M38.500 59A21 21 0 1 1 79 62" /><path d="M59 53L40 63" stroke-width="4" stroke-linecap="round" />
              <path d="M59 21v6M36 64l-6 3M82 64l6 3" stroke-width="2" />
            </g>
            <text x="59" y="16">3</text><text x="14" y="78">1.5</text><text x="97" y="78">6</text>
          </svg>
          <input id="look" type="range" min="0" max="2" value="0">
        </span>
        <span class="cap">Mode</span>
        <div class="modes">${btn("Standard")}${btn("Soft Clip")}${btn("True Peak", "on")}</div>
        <span class="center push">Routing</span>
        <div class="pair even">${btn("L/R", "on")}${btn("M/S")}</div>
      </div>`;
  }

  render() {
    uid = 0;
    return html`
      <div class="app">
        <div class="notch"></div>
        ${this.toolbar()}${this.arrangement()}
        <div class="rack">
          ${meter()}
          ${this.device("Bass Mono", 278, this.bassMono())}
          ${this.device("Clipper", 300, this.plug(true), true)}
          ${this.device("Pro-DS", 476, this.chain(), true)}
          ${this.device("Limiter", 568, this.limiter())}
          ${this.device("Youlean Loudness Meter 2", 476, this.chain(true), true, false)}
          <div class="dropzone">Drop Audio Effects Here</div>
        </div>
        <footer class="status">
          <span class="info">${I(8, 20, svg`<path d="M2 0h4v4H2zM2 6h4v13H2z"/>`)}</span>
          <div class="well hint"></div>
          <button class="well expand" aria-label="Expand">${I(12, 14, svg`<path d="M0 0L12 7L0 14z"/>`)}</button>
          <div class="well prog"></div>
          <button class="warn" aria-label="Show device view">${I(16, 14, svg`<path d="M8 0L16 14H0z"/>`)}</button>
          <span class="maplabel">Main</span>
          <div class="map"><i></i><i class="k"></i><i></i><i class="k"></i><i></i><i class="k"></i><i></i><i class="k"></i></div>
          <span class="levels">${I(54, 26, svg`<path d="M0 12h5v14H0zM8 0h5v26H8zM16 6h5v20h-5zM24 12h5v14h-5zM40 8h14l-7 10z"/>`)}</span>
        </footer>
      </div>`;
  }
}
